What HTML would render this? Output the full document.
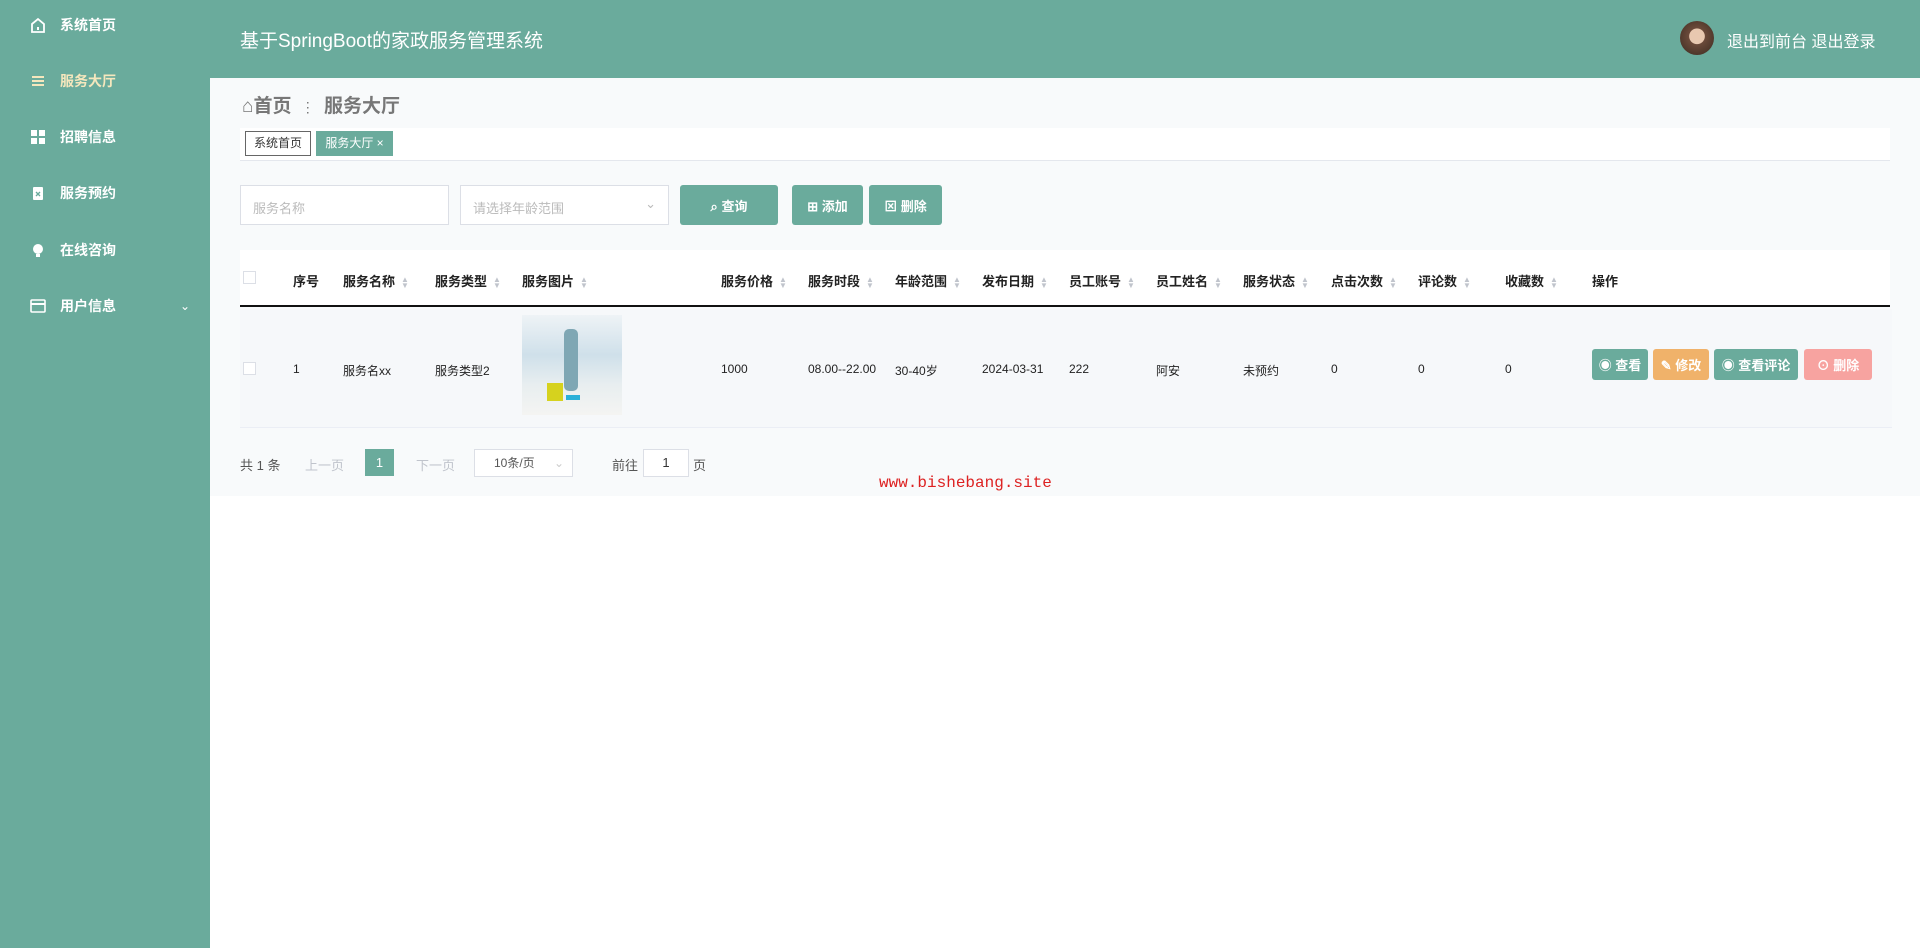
<!DOCTYPE html>
<html><head><meta charset="utf-8"><style>
*{margin:0;padding:0;box-sizing:border-box}
body{width:1920px;height:948px;background:#fff;font-family:"Liberation Sans","Noto Sans CJK SC",sans-serif;position:relative;overflow:hidden;color:#333}
.side{position:absolute;left:0;top:0;width:210px;height:948px;background:#6aab9c}
.mi{position:absolute;left:30px;height:20px;display:flex;align-items:center;color:#fff;font-size:14px;font-weight:bold}
.mi i{display:inline-block;width:16px;height:16px;margin-right:14px;position:relative}
.head{position:absolute;left:210px;top:0;right:0;height:78px;background:#6aab9c;color:#fff}
.abs{position:absolute}
.panel{position:absolute;left:210px;top:78px;width:1710px;height:418px;background:#f8fafb}
.btn{position:absolute;color:#fff;font-size:13px;font-weight:bold;display:flex;align-items:center;justify-content:center;border-radius:3px}
.th{position:absolute;top:271px;font-size:13px;font-weight:bold;color:#222}
.td{position:absolute;top:362px;font-size:12px;color:#222}
.s{display:inline-block;color:#c0c4cc;font-size:8px;line-height:6px;vertical-align:middle;margin-left:6px}
</style></head><body>
<div class="side">
 <div class="mi" style="top:15px"><i><svg width="16" height="16" viewBox="0 0 16 16"><path d="M2 7L8 2l6 5v8H2z" fill="none" stroke="#fff" stroke-width="1.8"/><rect x="7" y="10" width="2" height="3" fill="#fff"/></svg></i>系统首页</div>
 <div class="mi" style="top:71px;color:#f5e7bd"><i><svg width="16" height="16"><rect x="2" y="3" width="12" height="2" fill="#f5e7bd"/><rect x="2" y="7" width="12" height="2" fill="#f5e7bd"/><rect x="2" y="11" width="12" height="2" fill="#f5e7bd"/></svg></i>服务大厅</div>
 <div class="mi" style="top:127px"><i><svg width="16" height="16"><rect x="1" y="1" width="6" height="6" fill="#fff"/><rect x="9" y="1" width="6" height="6" fill="#fff"/><rect x="1" y="9" width="6" height="6" fill="#fff"/><rect x="9" y="9" width="6" height="6" fill="#fff"/></svg></i>招聘信息</div>
 <div class="mi" style="top:183px"><i><svg width="16" height="16"><rect x="3" y="2" width="10" height="13" rx="1" fill="#fff"/><path d="M6 7l4 4M10 7l-4 4" stroke="#6aab9c" stroke-width="1.3"/></svg></i>服务预约</div>
 <div class="mi" style="top:240px"><i><svg width="16" height="16"><circle cx="8" cy="7" r="5" fill="#fff"/><rect x="6" y="12" width="4" height="3" fill="#fff"/></svg></i>在线咨询</div>
 <div class="mi" style="top:296px;width:160px"><i><svg width="16" height="16"><rect x="1" y="2" width="14" height="12" rx="1" fill="none" stroke="#fff" stroke-width="1.6"/><rect x="1" y="5" width="14" height="2" fill="#fff"/></svg></i>用户信息<span style="position:absolute;right:0;font-weight:normal;font-size:12px">&#8964;</span></div>
</div>
<div class="head">
 <div class="abs" style="left:30px;top:26px;font-size:19px">基于SpringBoot的家政服务管理系统</div>
 <div class="abs" style="left:1470px;top:21px;width:34px;height:34px;border-radius:50%;background:radial-gradient(circle at 50% 45%,#e8c8b0 0 30%,#6b4a3a 32%,#3a2a20 100%)"></div>
 <div class="abs" style="left:1517px;top:28px;font-size:16px">退出到前台 退出登录</div>
</div>
<div class="panel"></div>
<div class="abs" style="left:242px;top:91px;font-size:19px;font-weight:bold;color:#777">⌂首页 <span style="font-weight:normal;font-size:14px;margin:0 4px">⋮</span> 服务大厅</div>
<div class="abs" style="left:240px;top:128px;width:1650px;height:33px;background:#fff;border-bottom:1px solid #e4e7ed"></div>
<div class="abs" style="left:245px;top:131px;width:66px;height:25px;border:1px solid #666;background:#fff;font-size:12px;line-height:23px;text-align:center;color:#333">系统首页</div>
<div class="abs" style="left:316px;top:131px;width:77px;height:25px;background:#6aab9c;color:#fff;font-size:12px;line-height:25px;text-align:center">服务大厅 ×</div>
<div class="abs" style="left:240px;top:185px;width:209px;height:40px;border:1px solid #dcdfe6;background:#fff;font-size:13px;color:#bbb;padding:12px 12px">服务名称</div>
<div class="abs" style="left:460px;top:185px;width:209px;height:40px;border:1px solid #dcdfe6;background:#fff;font-size:13px;color:#bbb;padding:12px 12px">请选择年龄范围<span style="position:absolute;right:12px;top:10px">⌄</span></div>
<div class="btn" style="left:680px;top:185px;width:98px;height:40px;background:#6aab9c">⌕ 查询</div>
<div class="btn" style="left:792px;top:185px;width:71px;height:40px;background:#6aab9c">⊞ 添加</div>
<div class="btn" style="left:869px;top:185px;width:73px;height:40px;background:#6aab9c">⊠ 删除</div>
<div class="abs" style="left:240px;top:250px;width:1650px;height:57px;background:#fff;border-bottom:2px solid #111"></div>
<div class="abs" style="left:240px;top:309px;width:1652px;height:119px;background:#f6f8fa;border-bottom:1px solid #ebeef5"></div>
<div class="abs" style="left:243px;top:271px;width:13px;height:13px;border:1px solid #dcdfe6;background:#fff"></div>
<div class="abs" style="left:243px;top:362px;width:13px;height:13px;border:1px solid #dcdfe6;background:#fff"></div>
<div class="th" style="left:293px">序号</div>
<div class="th" style="left:343px">服务名称<span class="s">▲<br>▼</span></div>
<div class="th" style="left:435px">服务类型<span class="s">▲<br>▼</span></div>
<div class="th" style="left:522px">服务图片<span class="s">▲<br>▼</span></div>
<div class="th" style="left:721px">服务价格<span class="s">▲<br>▼</span></div>
<div class="th" style="left:808px">服务时段<span class="s">▲<br>▼</span></div>
<div class="th" style="left:895px">年龄范围<span class="s">▲<br>▼</span></div>
<div class="th" style="left:982px">发布日期<span class="s">▲<br>▼</span></div>
<div class="th" style="left:1069px">员工账号<span class="s">▲<br>▼</span></div>
<div class="th" style="left:1156px">员工姓名<span class="s">▲<br>▼</span></div>
<div class="th" style="left:1243px">服务状态<span class="s">▲<br>▼</span></div>
<div class="th" style="left:1331px">点击次数<span class="s">▲<br>▼</span></div>
<div class="th" style="left:1418px">评论数<span class="s">▲<br>▼</span></div>
<div class="th" style="left:1505px">收藏数<span class="s">▲<br>▼</span></div>
<div class="th" style="left:1592px">操作</div>
<div class="td" style="left:293px">1</div>
<div class="td" style="left:343px">服务名xx</div>
<div class="td" style="left:435px">服务类型2</div>
<div class="abs" style="left:522px;top:315px;width:100px;height:100px;background:linear-gradient(180deg,#eef3f6 0,#cfe0ea 40%,#e8eef0 70%,#f4f4f2 100%)">
 <div class="abs" style="left:42px;top:14px;width:14px;height:62px;background:#7fa7b4;border-radius:5px"></div>
 <div class="abs" style="left:25px;top:68px;width:16px;height:18px;background:#d6d21e"></div>
 <div class="abs" style="left:44px;top:80px;width:14px;height:5px;background:#2bb0d8"></div>
</div>
<div class="td" style="left:721px">1000</div>
<div class="td" style="left:808px">08.00--22.00</div>
<div class="td" style="left:895px">30-40岁</div>
<div class="td" style="left:982px">2024-03-31</div>
<div class="td" style="left:1069px">222</div>
<div class="td" style="left:1156px">阿安</div>
<div class="td" style="left:1243px">未预约</div>
<div class="td" style="left:1331px">0</div>
<div class="td" style="left:1418px">0</div>
<div class="td" style="left:1505px">0</div>
<div class="btn" style="left:1592px;top:349px;width:56px;height:31px;background:#6aab9c">◉ 查看</div>
<div class="btn" style="left:1653px;top:349px;width:56px;height:31px;background:#f0b26a">✎ 修改</div>
<div class="btn" style="left:1714px;top:349px;width:84px;height:31px;background:#6aab9c">◉ 查看评论</div>
<div class="btn" style="left:1804px;top:349px;width:68px;height:31px;background:#f7a3a0">⊙ 删除</div>
<div class="abs" style="left:240px;top:455px;font-size:13px;color:#555">共 1 条</div>
<div class="abs" style="left:305px;top:455px;font-size:13px;color:#c0c4cc">上一页</div>
<div class="abs" style="left:365px;top:449px;width:29px;height:27px;background:#6aab9c;color:#fff;font-size:13px;line-height:27px;text-align:center">1</div>
<div class="abs" style="left:416px;top:455px;font-size:13px;color:#c0c4cc">下一页</div>
<div class="abs" style="left:474px;top:449px;width:99px;height:28px;border:1px solid #dcdfe6;background:#fff;font-size:12px;line-height:26px;padding-left:19px;color:#555">10条/页<span style="position:absolute;right:8px;color:#ccc">⌄</span></div>
<div class="abs" style="left:612px;top:455px;font-size:13px;color:#555">前往</div>
<div class="abs" style="left:643px;top:449px;width:46px;height:28px;border:1px solid #dcdfe6;background:#fff;font-size:13px;line-height:26px;text-align:center">1</div>
<div class="abs" style="left:693px;top:455px;font-size:13px;color:#555">页</div>
<div class="abs" style="left:879px;top:474px;font-family:'Liberation Mono',monospace;font-size:16px;color:#d22">www.bishebang.site</div>
</body></html>
